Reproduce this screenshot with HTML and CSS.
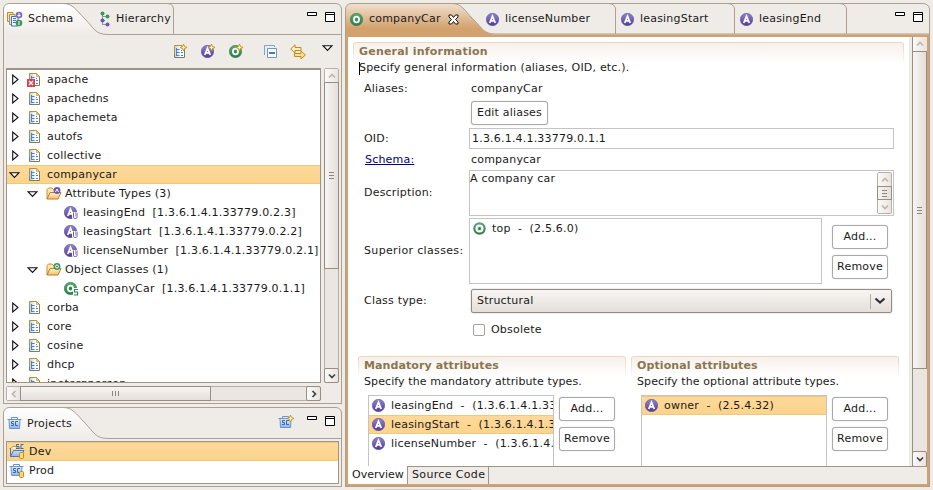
FILE: index.html
```html
<!DOCTYPE html>
<html lang="en">
<head>
<meta charset="utf-8">
<title>Schema Editor</title>
<link rel="stylesheet" href="styles.css">
</head>
<body>
<svg class="defs" width="0" height="0">
  <defs>
    <linearGradient id="gPurple" x1="0" y1="0" x2="0" y2="1"><stop offset="0" stop-color="#8f86cf"/><stop offset="1" stop-color="#543a9c"/></linearGradient>
    <linearGradient id="gGreen" x1="0" y1="0" x2="0" y2="1"><stop offset="0" stop-color="#5aa873"/><stop offset="1" stop-color="#2c7d48"/></linearGradient>
    <linearGradient id="gPage" x1="0" y1="0" x2="1" y2="0"><stop offset="0" stop-color="#b4d0f0"/><stop offset=".6" stop-color="#ffffff"/></linearGradient>
    <linearGradient id="gFolder" x1="0" y1="0" x2="0" y2="1"><stop offset="0" stop-color="#fff3d0"/><stop offset="1" stop-color="#f6c063"/></linearGradient>
    <linearGradient id="gBox" x1="0" y1="0" x2="0" y2="1"><stop offset="0" stop-color="#e4f0fb"/><stop offset="1" stop-color="#8db5e6"/></linearGradient>
    <linearGradient id="gTab" x1="0" y1="0" x2="0" y2="1"><stop offset="0" stop-color="#ffffff"/><stop offset="1" stop-color="#efebe7"/></linearGradient>
    <linearGradient id="gTan" x1="0" y1="0" x2="0" y2="1"><stop offset="0" stop-color="#f0e0cf"/><stop offset=".75" stop-color="#d2a16c"/><stop offset="1" stop-color="#d2a16c"/></linearGradient>
    <symbol id="page" viewBox="0 0 12 14">
      <path d="M.5.5H7.500L10.500 3.500V12.500H.5Z" fill="url(#gPage)"/>
      <path d="M.5 12V.5H7.500L10.500 3.500" fill="none" stroke="#b8912f"/>
      <path d="M.5 9V12.500H10.500V3.500" fill="none" stroke="#7e7d55"/>
      <path d="M7.500.5V3.500H10.500Z" fill="#e8cf7e" stroke="#b8912f" stroke-width=".6"/>
      <path d="M2.500 3V11M2 4.500H5.500M2 7.500H5.500M2 10.500H5.500" stroke="#4f80cc" fill="none"/>
      <path d="M7 5.500H8M7 7.500H9M7 10.500H9" stroke="#4f80cc" fill="none"/>
    </symbol>
    <symbol id="attr" viewBox="0 0 13 13">
      <circle cx="6.500" cy="6.500" r="6.200" fill="url(#gPurple)" stroke="#5d4aa0" stroke-width=".6"/>
      <path d="M3.700 10L6.500 3.200L9.300 10M4.800 7.800H8.200" fill="none" stroke="#fff" stroke-width="1.700"/>
    </symbol>
    <symbol id="obj" viewBox="0 0 13 13">
      <circle cx="6.500" cy="6.500" r="6.200" fill="url(#gGreen)" stroke="#2f7f4a" stroke-width=".6"/>
      <ellipse cx="6.500" cy="6.500" rx="2.600" ry="2.900" fill="none" stroke="#fff" stroke-width="1.700"/>
    </symbol>
    <symbol id="attrU" viewBox="0 0 15 14">
      <use href="#attr" width="13" height="13"/>
      <path d="M9.500 6V11Q9.500 12.500 11.200 12.500Q13 12.500 13 11V6" fill="none" stroke="#fff" stroke-width="3"/>
      <path d="M9.500 6.500V11.500Q9.500 12.500 11.200 12.500Q13 12.500 13 11.500V6.500" fill="none" stroke="#6f5cb0" stroke-width="1"/>
    </symbol>
    <symbol id="objS" viewBox="0 0 15 14">
      <use href="#obj" width="13" height="13"/>
      <circle cx="6.500" cy="6.500" r="1.300" fill="#2c7d48"/>
      <rect x="9" y="6" width="6" height="8" fill="#fff"/>
      <path d="M14 7.500H10.500V10H13.500V13H10" fill="none" stroke="#2f8a4e" stroke-width="1.200"/>
    </symbol>
    <symbol id="target" viewBox="0 0 13 13">
      <circle cx="6.500" cy="6.500" r="6.200" fill="url(#gGreen)"/>
      <circle cx="6.500" cy="6.500" r="3.300" fill="#d3e8d9" stroke="#fff" stroke-width="1.500"/>
      <circle cx="6.500" cy="6.500" r="1.500" fill="#2c7d48"/>
    </symbol>
    <symbol id="folder" viewBox="0 0 16 13">
      <path d="M1 12V2.500L2.500 1H6L7.500 2.500H12V5" fill="#fbe7b0" stroke="#c8922d"/>
      <path d="M1 12L4 5.500H15L12 12Z" fill="url(#gFolder)" stroke="#c8782a"/>
    </symbol>
    <symbol id="plus" viewBox="0 0 7 7">
      <path d="M3.500 0L4.500 2.500L7 3.500L4.500 4.500L3.500 7L2.500 4.500L0 3.500L2.500 2.500Z" fill="#fff2b0" stroke="#bd9021" stroke-width=".9"/>
    </symbol>
    <symbol id="proj" viewBox="0 0 15 12">
      <path d="M4.500 2V.5H10.500V2" fill="none" stroke="#6b92d0"/>
      <path d="M.5 2.500H14.500M2 2.500L2.500 11.500H12.500L13 2.500" fill="url(#gBox)" stroke="#6b92d0"/>
      <path d="M7 4.500H4.500V6.500H6.500V8.500H4M11 4.500H8.500V8.500H11" fill="none" stroke="#3568b0"/>
    </symbol>
    <symbol id="cyl" viewBox="0 0 6 7"><rect x=".5" y=".5" width="4" height="6" rx="1" fill="#ffd76b" stroke="#c88a1c"/></symbol>
    <symbol id="min" viewBox="0 0 10 4"><path d="M.5.5H9.500V3.500H.5Z" fill="#fff" stroke="#000"/></symbol>
    <symbol id="max" viewBox="0 0 10 11"><path d="M.5.5H9.500V9.500H.5ZM.5 2.500H9.500" fill="#fff" stroke="#000"/></symbol>
    <symbol id="closed" viewBox="0 0 7 11"><path d="M.7 1V10L6 5.500Z" fill="#fff" stroke="#111" stroke-width="1.100"/></symbol>
    <symbol id="open" viewBox="0 0 11 7"><path d="M1 .7H10L5.500 5.500Z" fill="#fff" stroke="#111" stroke-width="1.100"/></symbol>
    <symbol id="up" viewBox="0 0 8 6"><path d="M1 4.500L4 1.500L7 4.500" fill="none" stroke="currentColor" stroke-width="1.700"/></symbol>
    <symbol id="down" viewBox="0 0 8 6"><path d="M1 1.500L4 4.500L7 1.500" fill="none" stroke="currentColor" stroke-width="1.700"/></symbol>
  </defs>
</svg>

<div class="left">
  <section class="view schema">
    <header class="head">
      <svg class="frame" width="339" height="32">
        <path d="M.5 32V6Q1 1 6 .5H60C70 .5 73 7 82 16S92 31.500 105 31.500Z" fill="url(#gTab)"/>
        <path d="M.5 32V6Q1 1 6 .5H333Q338 1 338.500 6V32M60 .5C70 .5 73 7 82 16S92 31.500 105 31.500H339M165 .5Q170 1 170.500 6V31" fill="none" stroke="#aca093"/>
      </svg>
      <svg class="tabicon" width="16" height="16">
        <path d="M.5 1.500H6V10.500H.5Z" fill="#f5e3ae" stroke="#b8912f"/><path d="M2.500 3.500H8V13.500H2.500Z" fill="#dbe8f7" stroke="#b8912f"/>
        <path d="M4.500 5.500H11V15H4.500Z" fill="#f4f8ff" stroke="#3b6fc4"/><path d="M6 7.500H9M6 9.500H9M6 11.500H9" stroke="#3b6fc4"/>
        <circle cx="12" cy="4" r="3.300" fill="#7a69bd"/><path d="M12 2V6M10.500 4.500H13.500" stroke="#fff"/>
        <circle cx="12" cy="12" r="3.300" fill="#3d9459"/><path d="M12 10V14" stroke="#fff"/>
      </svg>
      <span class="tab t-schema">Schema</span>
      <svg class="tabicon" width="11" height="16">
        <path d="M2.500 3V13.500M2 5.500H8M2 13.500H8M2 9.500H5" stroke="#8a9a95" fill="none"/>
        <circle cx="2.500" cy="2.500" r="2" fill="#3d9459"/><circle cx="7.500" cy="5.500" r="2" fill="#3d9459"/><circle cx="2.500" cy="9.500" r="2" fill="#6a55b5"/><circle cx="7.500" cy="13.500" r="2" fill="#6a55b5"/>
      </svg>
      <span class="tab">Hierarchy</span>
      <span class="wins"><svg width="10" height="4"><use href="#min"/></svg><svg width="10" height="11"><use href="#max"/></svg></span>
    </header>
    <div class="toolbar">
      <svg width="14" height="15"><use href="#page" x="0" y="1" width="12" height="14"/><use href="#plus" x="6" y="0" width="7" height="7"/></svg>
      <svg width="14" height="15"><use href="#attr" y="1" width="13" height="13"/><use href="#plus" x="7" width="7" height="7"/></svg>
      <svg width="14" height="15"><use href="#obj" y="1" width="13" height="13"/><use href="#plus" x="7" width="7" height="7"/></svg>
      <i class="sep"></i>
      <svg width="14" height="15"><path d="M.5 11V1.500H10.500V3" fill="#e4effa" stroke="#7fa5cf"/><path d="M3.500 4.500H12.500V13.500H3.500Z" fill="#f4faff" stroke="#7596bd"/><path d="M5 9H11" stroke="#1d4f8f" stroke-width="1.500"/></svg>
      <svg class="link" width="16" height="16"><path d="M.7 5L5 .8V3.500H11V6.500H5V9Z" fill="#fff0b8" stroke="#c08a1d"/><path d="M15.300 11L11 7V9.500H4.500V12.500H11V15Z" fill="#ffe08a" stroke="#c08a1d"/></svg>
      <svg class="menu" width="11" height="7"><use href="#open"/></svg>
    </div>
    <div class="scrollgrid">
      <div class="tree">
        <div class="row"><svg class="tw" width="7" height="11"><use href="#closed"/></svg><span class="ic"><svg width="12" height="14"><use href="#page"/></svg><svg class="err" width="8" height="8"><rect width="8" height="8" fill="#d9434f"/><path d="M2 2L6 6M6 2L2 6" stroke="#fff" stroke-width="1.300"/></svg></span>apache</div>
        <div class="row"><svg class="tw" width="7" height="11"><use href="#closed"/></svg><span class="ic"><svg width="12" height="14"><use href="#page"/></svg></span>apachedns</div>
        <div class="row"><svg class="tw" width="7" height="11"><use href="#closed"/></svg><span class="ic"><svg width="12" height="14"><use href="#page"/></svg></span>apachemeta</div>
        <div class="row"><svg class="tw" width="7" height="11"><use href="#closed"/></svg><span class="ic"><svg width="12" height="14"><use href="#page"/></svg></span>autofs</div>
        <div class="row"><svg class="tw" width="7" height="11"><use href="#closed"/></svg><span class="ic"><svg width="12" height="14"><use href="#page"/></svg></span>collective</div>
        <div class="row sel"><svg class="tw o" width="11" height="7"><use href="#open"/></svg><span class="ic"><svg width="12" height="14"><use href="#page"/></svg></span>companycar</div>
        <div class="row l2"><svg class="tw o" width="11" height="7"><use href="#open"/></svg><span class="ic"><svg width="16" height="13"><use href="#folder"/><circle cx="11" cy="3.500" r="3.400" fill="#6a58b2"/><path d="M9.500 5L11 2L12.500 5" stroke="#fff" fill="none"/></svg></span>Attribute Types (3)</div>
        <div class="row l3"><span class="ic"><svg width="15" height="14"><use href="#attrU"/></svg></span>leasingEnd &nbsp;[1.3.6.1.4.1.33779.0.2.3]</div>
        <div class="row l3"><span class="ic"><svg width="15" height="14"><use href="#attrU"/></svg></span>leasingStart &nbsp;[1.3.6.1.4.1.33779.0.2.2]</div>
        <div class="row l3"><span class="ic"><svg width="15" height="14"><use href="#attrU"/></svg></span>licenseNumber &nbsp;[1.3.6.1.4.1.33779.0.2.1]</div>
        <div class="row l2"><svg class="tw o" width="11" height="7"><use href="#open"/></svg><span class="ic"><svg width="16" height="13"><use href="#folder"/><circle cx="11" cy="3.500" r="3.400" fill="#3d9459"/><circle cx="11" cy="3.500" r="1.500" stroke="#fff" fill="none"/></svg></span>Object Classes (1)</div>
        <div class="row l3"><span class="ic"><svg width="15" height="14"><use href="#objS"/></svg></span>companyCar &nbsp;[1.3.6.1.4.1.33779.0.1.1]</div>
        <div class="row"><svg class="tw" width="7" height="11"><use href="#closed"/></svg><span class="ic"><svg width="12" height="14"><use href="#page"/></svg></span>corba</div>
        <div class="row"><svg class="tw" width="7" height="11"><use href="#closed"/></svg><span class="ic"><svg width="12" height="14"><use href="#page"/></svg></span>core</div>
        <div class="row"><svg class="tw" width="7" height="11"><use href="#closed"/></svg><span class="ic"><svg width="12" height="14"><use href="#page"/></svg></span>cosine</div>
        <div class="row"><svg class="tw" width="7" height="11"><use href="#closed"/></svg><span class="ic"><svg width="12" height="14"><use href="#page"/></svg></span>dhcp</div>
        <div class="row"><svg class="tw" width="7" height="11"><use href="#closed"/></svg><span class="ic"><svg width="12" height="14"><use href="#page"/></svg></span>inetorgperson</div>
      </div>
      <div class="vbar">
        <span class="sb off"><svg width="8" height="6"><use href="#up"/></svg></span>
        <span class="thumb treethumb"><i class="grip"></i></span>
        <span class="sb end"><svg width="8" height="6"><use href="#down"/></svg></span>
      </div>
      <div class="hbar">
        <span class="sb off"><svg class="lft" width="8" height="6"><use href="#up"/></svg></span>
        <span class="thumb"><i class="grip"></i></span>
        <span class="sb end"><svg class="rgt" width="8" height="6"><use href="#up"/></svg></span>
      </div>
    </div>
  </section>

  <section class="view projects">
    <header class="head">
      <svg class="frame" width="339" height="32">
        <path d="M.5 32V6Q1 1 6 .5H60C70 .5 73 7 82 16S92 31.500 105 31.500Z" fill="url(#gTab)"/>
        <path d="M.5 32V6Q1 1 6 .5H333Q338 1 338.500 6V32M60 .5C70 .5 73 7 82 16S92 31.500 105 31.500H339" fill="none" stroke="#aca093"/>
      </svg>
      <svg class="tabicon" width="15" height="12"><use href="#proj"/></svg>
      <span class="tab t-proj">Projects</span>
      <span class="wins"><svg class="newproj" width="16" height="13"><use href="#proj" y="1" width="15" height="12"/><use href="#plus" x="9" width="7" height="7"/></svg><svg width="10" height="4"><use href="#min"/></svg><svg width="10" height="11"><use href="#max"/></svg></span>
    </header>
    <div class="projlist">
      <div class="row sel"><svg width="16" height="15"><path d="M.5 4.500H2L3.500 2.500H7L8.500 4.500H12" fill="#eaf3fd" stroke="#c09a3c"/><path d="M1.500 4V12.500H12L15 6.500H4.500L1.500 12.500" fill="url(#gBox)" stroke="#4b77c4"/><path d="M10 .5H7.500V2.500H10V4.500H7M14.500.5H12V4.500H14.500" fill="none" stroke="#3568b0"/><use href="#cyl" x="10" y="8" width="6" height="7"/></svg>Dev</div>
      <div class="row"><svg width="16" height="14"><use href="#proj" width="15" height="12"/><use href="#cyl" x="10" y="7" width="6" height="7"/></svg>Prod</div>
    </div>
  </section>
</div>

<main class="editor">
  <header class="head">
    <svg class="frame" width="585" height="34">
      <path d="M.5 34V6Q1 1 6 .5H107C117 .5 119 7 128 16S139 31.500 150 31.500H585V34Z" fill="url(#gTan)"/>
      <path d="M.5 34V6Q1 1 6 .5H578Q584 1 584.500 6V34M107 .5C117 .5 119 7 128 16S139 31 150 31H584M264 .5Q270 1 270.500 6V31M383 .5Q389 1 389.500 6V31M495 .5Q501 1 501.500 6V31" fill="none" stroke="#aca093"/>
    </svg>
    <span class="etab e1"><svg width="13" height="13"><use href="#obj"/></svg><span>companyCar</span><svg class="x" width="11" height="11"><path d="M1 1H3.500L5.500 3.500L7.500 1H10V3L7.500 5.500L10 8V10H7.500L5.500 7.500L3.500 10H1V8L3.500 5.500L1 3Z" fill="#fff" stroke="#111"/></svg></span>
    <span class="etab e2"><svg width="13" height="13"><use href="#attr"/></svg><span>licenseNumber</span></span>
    <span class="etab e3"><svg width="13" height="13"><use href="#attr"/></svg><span>leasingStart</span></span>
    <span class="etab e4"><svg width="13" height="13"><use href="#attr"/></svg><span>leasingEnd</span></span>
    <span class="wins"><svg width="10" height="4"><use href="#min"/></svg><svg width="10" height="11"><use href="#max"/></svg></span>
  </header>
  <div class="body">
    <div class="page">
      <div class="form">
        <div class="section">
          <h2 class="g">General information</h2>
          <p class="g"><i class="caret"></i>Specify general information (aliases, OID, etc.).</p>
        </div>
        <div class="fields">
          <label>Aliases:</label><div class="val">companyCar</div>
          <span></span><div class="btnrow"><span class="btn wide">Edit aliases</span></div>
          <label>OID:</label><div class="input">1.3.6.1.4.1.33779.0.1.1</div>
          <label><a>Schema:</a></label><div class="val">companycar</div>
          <label>Description:</label>
          <div class="area"><span>A company car</span>
            <div class="vbar mini"><span class="sb off"><svg width="8" height="6"><use href="#up"/></svg></span><span class="thumb"><i class="grip"></i></span><span class="sb off"><svg width="8" height="6"><use href="#down"/></svg></span></div>
          </div>
          <label class="sc">Superior classes:</label>
          <div class="sup">
            <div class="list"><div class="item"><svg width="13" height="13"><use href="#target"/></svg>top &nbsp;- &nbsp;(2.5.6.0)</div></div>
            <div class="btns"><span class="btn">Add...</span><span class="btn">Remove</span></div>
          </div>
          <label>Class type:</label>
          <div class="combo"><span>Structural</span><i></i><svg width="12" height="8"><path d="M1.500 1.500L6 5.500L10.500 1.500" fill="none" stroke="#333" stroke-width="2.200"/></svg></div>
          <span></span>
          <div class="check"><i></i>Obsolete</div>
        </div>
        <div class="pair">
          <div class="section">
            <h2>Mandatory attributes</h2>
            <p>Specify the mandatory attribute types.</p>
            <div class="picker">
              <div class="list">
                <div class="item"><svg width="13" height="13"><use href="#attr"/></svg>leasingEnd &nbsp;- &nbsp;(1.3.6.1.4.1.33779.0.2.3)</div>
                <div class="item sel"><svg width="13" height="13"><use href="#attr"/></svg>leasingStart &nbsp;- &nbsp;(1.3.6.1.4.1.33779.0.2.2)</div>
                <div class="item"><svg width="13" height="13"><use href="#attr"/></svg>licenseNumber &nbsp;- &nbsp;(1.3.6.1.4.1.33779.0.2.1)</div>
              </div>
              <div class="btns"><span class="btn">Add...</span><span class="btn">Remove</span></div>
            </div>
          </div>
          <div class="section">
            <h2>Optional attributes</h2>
            <p>Specify the optional attribute types.</p>
            <div class="picker">
              <div class="list"><div class="item sel"><svg width="13" height="13"><use href="#attr"/></svg>owner &nbsp;- &nbsp;(2.5.4.32)</div></div>
              <div class="btns"><span class="btn">Add...</span><span class="btn">Remove</span></div>
            </div>
          </div>
        </div>
      </div>
      <div class="vbar pagebar">
        <span class="sb off"><svg width="8" height="6"><use href="#up"/></svg></span>
        <span class="thumb"><i class="grip"></i></span>
        <span class="sb end"><svg width="8" height="6"><use href="#down"/></svg></span>
      </div>
    </div>
    <nav class="btabs"><span class="on">Overview</span><span>Source Code</span></nav>
  </div>
</main>
</body>
</html>
```
FILE: styles.css
```css
* { box-sizing: border-box; }
body {
  margin: 0; padding: 3px 3px 0; width: 933px; height: 490px; overflow: hidden;
  display: flex; gap: 3px; color: #1a1a1a;
  background: linear-gradient(#cdc8c3, #cdc8c3) 374px 489px / 97px 1px no-repeat #efebe7;
  font: 11px/14px "DejaVu Sans", sans-serif; letter-spacing: .2px; white-space: nowrap;
}
svg { display: block; flex: none; }
.defs { position: absolute; }
.left { width: 339px; display: flex; flex-direction: column; gap: 3px; }

.head { position: relative; height: 32px; display: flex; align-items: center; flex: none; }
.head > * { position: relative; }
.head .frame { position: absolute; left: 0; top: 0; }
.view { display: flex; flex-direction: column; }
.schema { height: 401px; background: linear-gradient(#aca093, #aca093) 0 100% / 100% 1px no-repeat, linear-gradient(#aca093, #aca093) 0 100% / 1px 372px no-repeat, linear-gradient(#aca093, #aca093) 100% 100% / 1px 372px no-repeat; }
.projects { height: 80px; background: linear-gradient(#aca093, #aca093) 0 100% / 100% 1px no-repeat, linear-gradient(#aca093, #aca093) 0 100% / 1px 50px no-repeat, linear-gradient(#aca093, #aca093) 100% 100% / 1px 50px no-repeat; }
.view .head { padding-left: 4px; }
.tabicon + .tab { margin-left: 5px; }
.t-schema { width: 68px; margin-right: 4px; }
.wins { margin-left: auto; align-self: flex-start; display: flex; gap: 8px; padding: 9px 7px 0 0; }
.newproj { margin: -1px 5px 0 0; }

.toolbar { height: 33px; display: flex; align-items: center; padding-left: 171px; }
.toolbar svg { margin-right: 13px; }
.toolbar svg + svg { margin-right: 14px; }
.sep { width: 1px; height: 27px; background: #c9b9a8; margin: 0 11px 0 -4px; }
.toolbar .sep + svg { margin-right: 12px; }
.toolbar svg.link { margin-right: 16px; }
.toolbar .menu { margin-bottom: 7px; }

.scrollgrid { display: grid; grid-template: 315px 15px / 315px 15px; gap: 3px; padding-left: 3px; }
.tree { border: 1px solid #a09486; border-top-width: 2px; background: #fff; overflow: hidden; }
.row { height: 19px; display: flex; align-items: center; padding-left: 5px; }
.tw { margin-right: 10px; }
.tw.o { margin: 1px 9px 0 -3px; }
.ic { position: relative; width: 18px; }
.l2 { padding-left: 23px; }
.l2 .ic { width: 19px; }
.l2 .tw { margin-right: 8px; }
.l3 { padding-left: 57px; }
.l3 .ic { width: 19px; }
.err { position: absolute; left: -2px; top: 6px; }
.sel { background: linear-gradient(#ffd99b, #fad38b); box-shadow: inset 0 1px #eec97d, inset 0 -1px #eec97d; }

.vbar, .hbar { display: flex; background: #eae6e2; border: 1px solid #b8aea4; border-radius: 2px; }
.vbar { flex-direction: column; }
.sb { width: 13px; height: 13px; flex: none; display: grid; place-items: center; background: linear-gradient(90deg, #fbfaf9, #e9e4df); color: #444; }
.sb.off { color: #c0b5aa; }
.sb.end { margin-top: auto; outline: 1px solid #978d84; border-radius: 1px; }
.hbar .sb.end { margin: 0 0 0 auto; }
.lft { transform: rotate(-90deg); }
.rgt { transform: rotate(90deg); }
.thumb { display: grid; place-items: center; background: linear-gradient(90deg, #f6f4f2, #e5dfdb); box-shadow: 0 0 0 1px #978d84; margin-top: 1px; }
.hbar .thumb { background: linear-gradient(#f6f4f2, #e5dfdb); margin: 0 0 0 1px; width: 189px; }
.treethumb { height: 185px; }
.grip { width: 5px; height: 7px; background: repeating-linear-gradient(#8d8680 0 1px, transparent 1px 3px); }
.hbar .grip { width: 7px; height: 5px; background: repeating-linear-gradient(90deg, #8d8680 0 1px, transparent 1px 3px); }

.t-proj { margin-top: 1px; }
.projlist { margin: 2px 3px 0; height: 43px; border: 1px solid #a09486; background: #fff; }
.projlist .row { padding-left: 2px; gap: 4px; }

.editor { width: 585px; height: 484px; }
.editor .head { height: 34px; }
.etab { display: flex; align-items: center; gap: 6px; margin-top: -2px; height: 32px; }
.e1 { padding-left: 5px; width: 141px; }
.e1 .x { margin-left: 1px; }
.e2 { width: 135px; }
.e3 { width: 119px; }
.body { height: 450px; border: 1px solid #aca093; border-width: 0 1px 1px; padding: 0 2px 2px; background: #d2a16c; display: flex; flex-direction: column; }
.page { height: 429px; display: flex; background: #fff; overflow: hidden; }
.form { width: 561px; padding: 5px 5px 0; flex: none; }
.pagebar { width: 18px; border: 0; border-radius: 0; padding-left: 4px; height: 429px; background: linear-gradient(90deg, #efebe7 3px, #978d84 3px 4px, #eae5e1 4px); }
.pagebar .sb { width: 13px; height: 14px; }
.pagebar .thumb { height: 316px; width: 13px; }
.btabs { height: 18px; display: flex; background: #efebe7; border-top: 1px solid #a09486; }
.btabs span { padding: 0 4px; line-height: 16px; border-right: 1px solid #a09486; width: 81px; letter-spacing: .35px; }
.btabs .on { background: #fff; margin-top: -1px; width: 60px; line-height: 17px; letter-spacing: 0; }

.section { border-top: 1px solid #ecd8c0; border-radius: 3px 3px 0 0; background: linear-gradient(#e8d5c0, #fff) 0 0 / 1px 22px no-repeat, linear-gradient(#e8d5c0, #fff) 100% 0 / 1px 22px no-repeat, linear-gradient(#f7f0eb, #fff 20px) 0 0 / 100% 22px no-repeat; }
h2 { margin: 0; font-size: 11px; line-height: 16px; color: #8b7650; padding: 1px 0 0 6px; }
p { margin: 0; line-height: 14px; padding: 1px 0 0 6px; position: relative; }
.caret { position: absolute; left: 6px; top: 2px; width: 1px; height: 13px; background: #000; }
.fields { display: grid; grid-template: 21px 27px 25px 17px 50px 66px 34px 24px / 105px 425px; padding: 3px 0 0 11px; align-items: start; }
.fields label { align-self: center; }
.fields .sc { letter-spacing: .35px; }
.fields a { color: #000080; text-decoration: underline; padding-left: 1px; }
.val { align-self: center; padding-left: 2px; }
.btnrow { align-self: center; padding-left: 2px; }
.btn { display: block; width: 56px; height: 24px; border: 1px solid #a9a9a9; border-radius: 3px; box-shadow: 0 0 1px #bbb; text-align: center; line-height: 22px; background: #fff; }
.btn.wide { width: 77px; }
.btns { display: flex; flex-direction: column; gap: 6px; }
.input { height: 21px; align-self: center; border: 1px solid #c4c4c4; padding-left: 2px; line-height: 19px; }
.area { height: 46px; margin-top: 2px; border: 1px solid #c4c4c4; display: flex; justify-content: space-between; padding-right: 1px; line-height: 15px; }
.mini { width: 15px; margin: 1px 0; }
.mini .sb { height: 13px; }
.mini .thumb { flex: 1; margin: 1px 0; }
.sup { display: flex; gap: 10px; }
.sup .list { width: 353px; height: 66px; }
.sup .btns { padding-top: 7px; }
.list { border: 1px solid #c4c4c4; background: #fff; overflow: hidden; }
.item { height: 19px; display: flex; align-items: center; gap: 6px; padding-left: 3px; }
.combo { align-self: center; margin-left: 2px; width: 421px; height: 24px; border: 1px solid #968b80; border-radius: 2px; background: linear-gradient(#f7f5f3, #e5dfda); display: flex; align-items: center; padding: 0 5px; box-shadow: 0 0 1px 1px #eee; }
.combo i { margin-left: auto; width: 1px; height: 15px; background: #b5aba1; margin-right: 3px; }
.check { align-self: center; display: flex; gap: 6px; padding-left: 4px; align-items: center; }
.check i { width: 12px; height: 12px; border: 1px solid #a0a0a0; border-radius: 2px; background: #fff; }
.pair { display: flex; gap: 5px; padding-left: 5px; margin-top: 14px; }
.pair .section { width: 268px; }
.pair h2, .pair p { letter-spacing: .1px; }
.picker { display: flex; gap: 5px; padding: 6px 0 0 10px; }
.picker .list { width: 186px; height: 90px; }
.picker .btns { padding-top: 2px; }
```
